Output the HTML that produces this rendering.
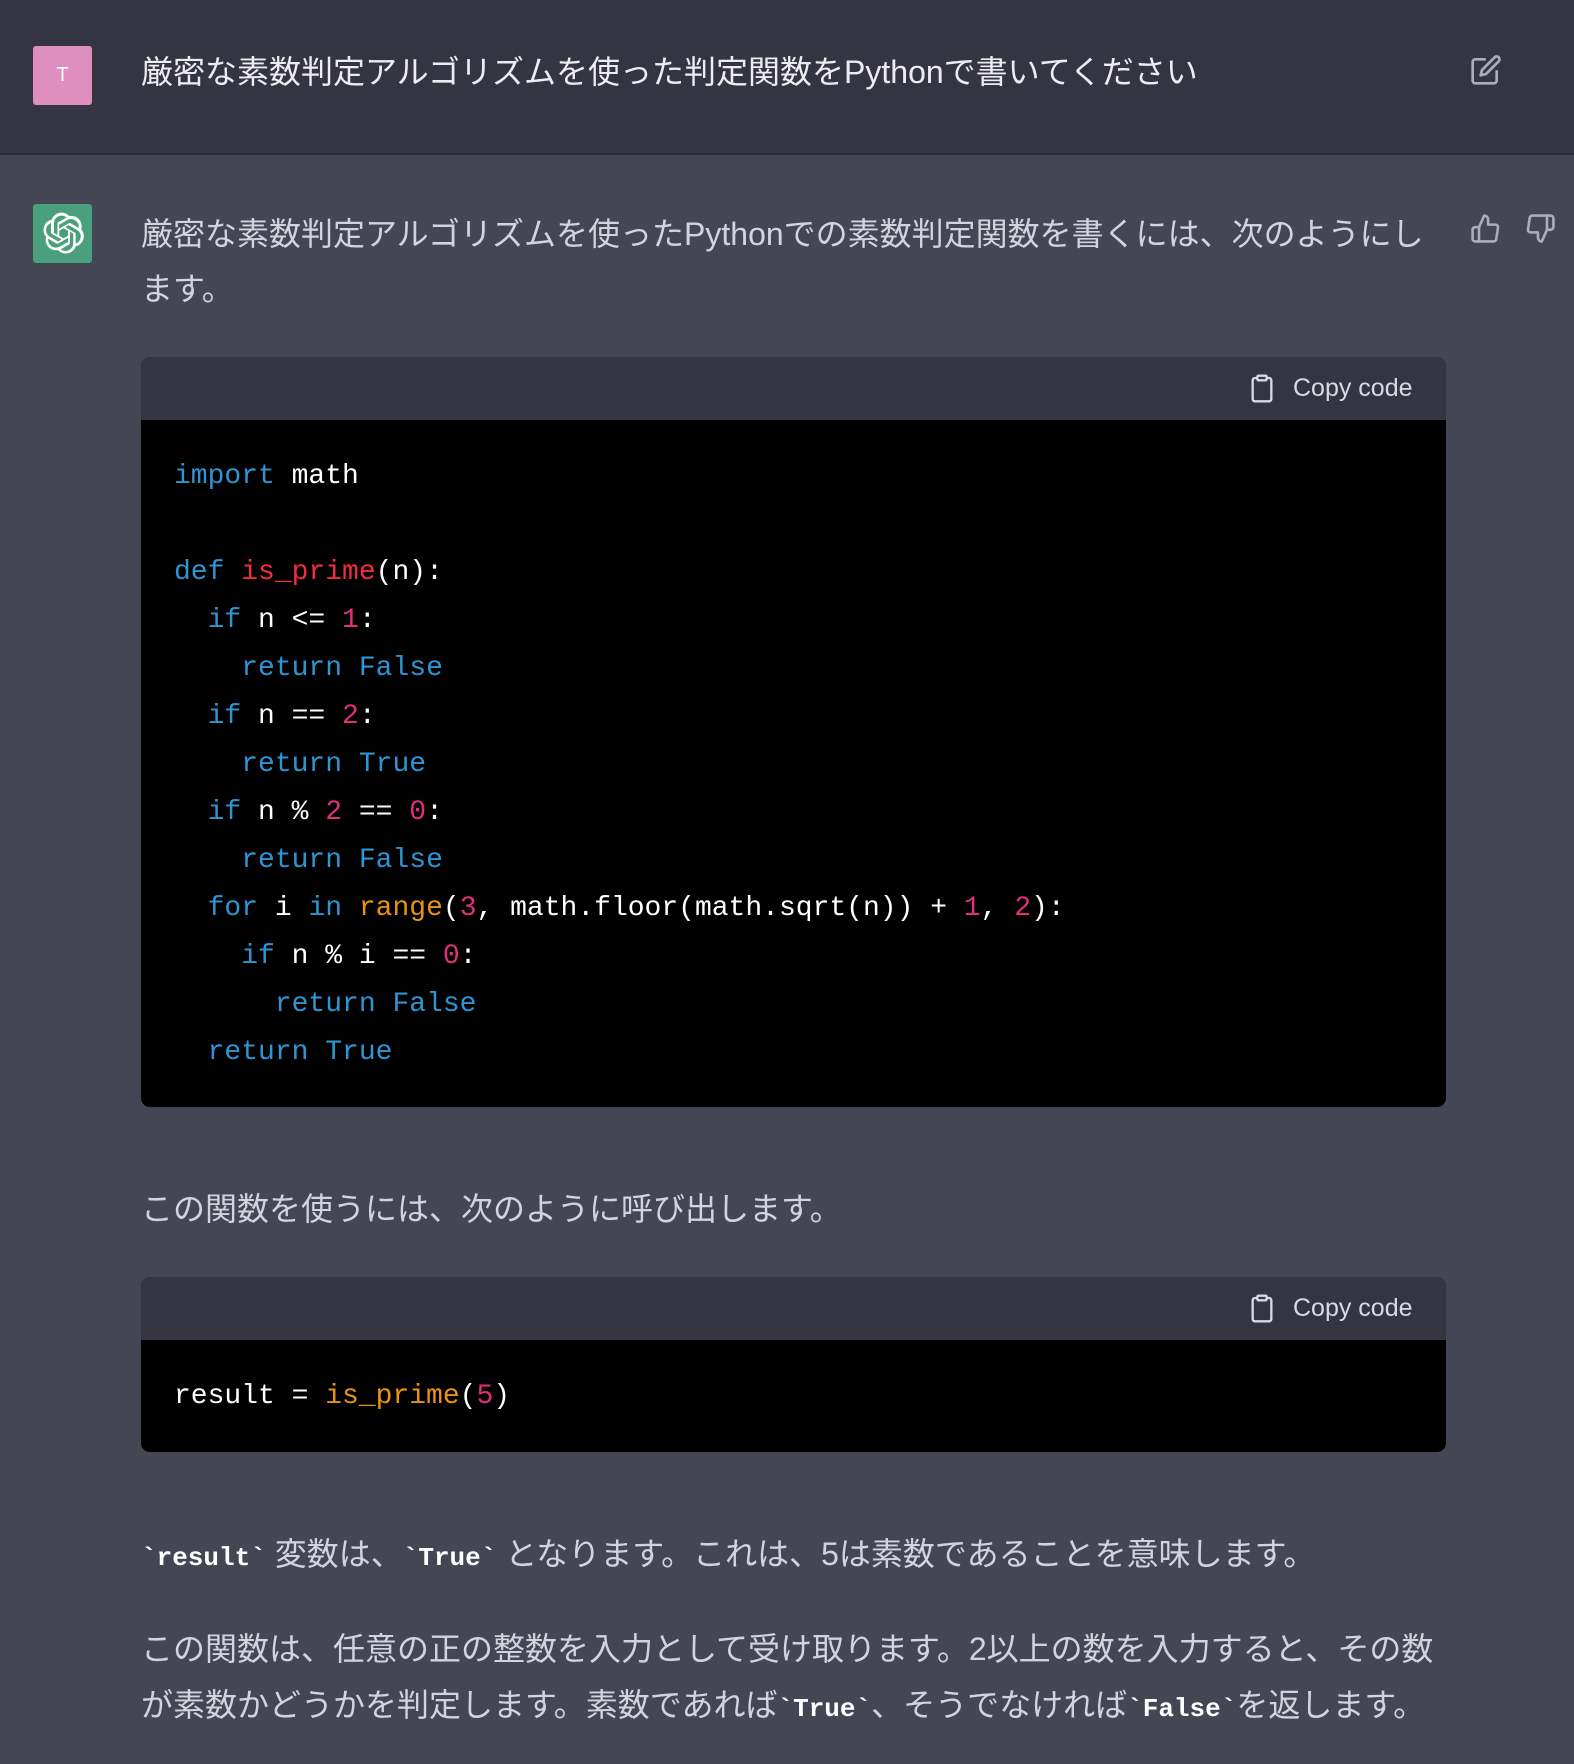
<!DOCTYPE html>
<html><head><meta charset="utf-8"><style>
*{margin:0;padding:0;box-sizing:border-box}
body{width:1574px;height:1764px;background:#444654;position:relative;overflow:hidden;font-family:"Liberation Sans","Noto Sans CJK JP",sans-serif;color:#d1d5db}
.hdr{position:absolute;left:0;top:0;width:1574px;height:155px;background:#343541;border-bottom:2px solid #2b2c35}
.t{position:absolute;font-size:32px;line-height:56px;height:56px;white-space:nowrap}
.av{position:absolute;left:33px;width:59px;height:59px;border-radius:3px}
.code{position:absolute;left:141px;width:1305px;background:#000;border-radius:9px;overflow:hidden}
.ch{height:63px;background:#343541;position:relative}
.cp{position:absolute;left:1152px;top:0;line-height:63px;font-size:25px;color:#d9d9e3}
.cp svg{position:absolute;left:-45px;top:16px}
.cl{position:absolute;left:33px;font-family:"Liberation Mono","DejaVu Sans Mono",monospace;font-size:28px;line-height:48px;color:#fff;white-space:pre}
.k{color:#2e95d3}.f{color:#f22c3d}.n{color:#df3079}.o{color:#e9950c}
code{font-family:"Liberation Mono",monospace;font-weight:bold;color:#fff;font-size:26px}
</style></head><body>
<div class="hdr"></div>
<div class="av" style="top:46px;background:#de8fbf;color:#fff;font-size:20px;line-height:59px;text-align:center">T</div>
<div class="t" style="left:141px;top:44px;color:#ececf1">厳密な素数判定アルゴリズムを使った判定関数をPythonで書いてください</div>
<svg style="position:absolute;left:1470px;top:54px" width="32" height="32" viewBox="0 0 24 24" fill="none" stroke="#acacbe" stroke-width="2" stroke-linecap="round" stroke-linejoin="round"><path d="M11 4H4a2 2 0 0 0-2 2v14a2 2 0 0 0 2 2h14a2 2 0 0 0 2-2v-7"/><path d="M18.5 2.5a2.1 2.1 0 0 1 3 3L12 15l-4 1 1-4 9.5-9.5z"/></svg>

<div class="av" style="top:204px;background:#4a9f7f"></div>
<svg style="position:absolute;left:40px;top:211px" width="45" height="45" viewBox="0 0 41 41" fill="#fff"><path d="M37.5 16.7a9.3 9.3 0 0 0-.8-7.6 9.4 9.4 0 0 0-10.1-4.5A9.3 9.3 0 0 0 19.6 1.5a9.4 9.4 0 0 0-9 6.5 9.3 9.3 0 0 0-6.2 4.5 9.4 9.4 0 0 0 1.2 11 9.3 9.3 0 0 0 .8 7.6 9.4 9.4 0 0 0 10.1 4.5 9.3 9.3 0 0 0 7 3.1 9.4 9.4 0 0 0 9-6.5 9.3 9.3 0 0 0 6.2-4.5 9.4 9.4 0 0 0-1.2-11zM23.5 36.4a7 7 0 0 1-4.5-1.6l.2-.1 7.4-4.3a1.2 1.2 0 0 0 .6-1.1V18.8l3.1 1.8v8.6a7 7 0 0 1-6.8 7.2zM8.4 30a7 7 0 0 1-.8-4.7l.2.1 7.4 4.3a1.2 1.2 0 0 0 1.2 0l9.1-5.2v3.6L18 32.4A7 7 0 0 1 8.4 30zM6.4 14a7 7 0 0 1 3.7-3.1v8.8a1.2 1.2 0 0 0 .6 1.1l9 5.2-3.1 1.8-7.5-4.3A7 7 0 0 1 6.4 14zm25.7 6L23 14.7l3.1-1.8 7.5 4.3a7 7 0 0 1-1.1 12.6v-8.8a1.2 1.2 0 0 0-.6-1.1zm3.1-4.6-.2-.1-7.4-4.3a1.2 1.2 0 0 0-1.2 0l-9.1 5.2v-3.6l7.5-4.3a7 7 0 0 1 10.4 7.2zM15.8 21.7l-3.1-1.8V11.3a7 7 0 0 1 11.5-5.4l-.2.1-7.4 4.3a1.2 1.2 0 0 0-.6 1.1zm1.7-3.7 4-2.3 4 2.3v4.6l-4 2.3-4-2.3z"/></svg>
<div class="t" style="left:141px;top:206px">厳密な素数判定アルゴリズムを使ったPythonでの素数判定関数を書くには、次のようにし</div>
<div class="t" style="left:141px;top:261px">ます。</div>
<svg style="position:absolute;left:1470px;top:213px" width="31" height="31" viewBox="0 0 24 24" fill="none" stroke="#acacbe" stroke-width="2" stroke-linecap="round" stroke-linejoin="round"><path d="M14 9V5a3 3 0 0 0-3-3l-4 9v11h11.3a2 2 0 0 0 2-1.7l1.4-9a2 2 0 0 0-2-2.3z"/><path d="M7 22H4a2 2 0 0 1-2-2v-7a2 2 0 0 1 2-2h3"/></svg>
<svg style="position:absolute;left:1525px;top:213px" width="31" height="31" viewBox="0 0 24 24" fill="none" stroke="#acacbe" stroke-width="2" stroke-linecap="round" stroke-linejoin="round"><path d="M10 15v4a3 3 0 0 0 3 3l4-9V2H5.7a2 2 0 0 0-2 1.7l-1.4 9a2 2 0 0 0 2 2.3z"/><path d="M17 2h2.7A2.3 2.3 0 0 1 22 4v7a2.3 2.3 0 0 1-2.3 2H17"/></svg>

<div class="code" style="top:357px;height:750px">
<div class="ch"><div class="cp"><svg width="28" height="31" viewBox="0 0 24 26" fill="none" stroke="#d9d9e3" stroke-width="2" stroke-linecap="round" stroke-linejoin="round"><path d="M16 4h2a2 2 0 0 1 2 2v16a2 2 0 0 1-2 2H6a2 2 0 0 1-2-2V6a2 2 0 0 1 2-2h2"/><rect x="8" y="2" width="8" height="4" rx="1"/></svg>Copy code</div></div>
<div class="cl" style="top:96px"><span class="k">import</span> math

<span class="k">def</span> <span class="f">is_prime</span>(n):
  <span class="k">if</span> n &lt;= <span class="n">1</span>:
    <span class="k">return</span> <span class="k">False</span>
  <span class="k">if</span> n == <span class="n">2</span>:
    <span class="k">return</span> <span class="k">True</span>
  <span class="k">if</span> n % <span class="n">2</span> == <span class="n">0</span>:
    <span class="k">return</span> <span class="k">False</span>
  <span class="k">for</span> i <span class="k">in</span> <span class="o">range</span>(<span class="n">3</span>, math.floor(math.sqrt(n)) + <span class="n">1</span>, <span class="n">2</span>):
    <span class="k">if</span> n % i == <span class="n">0</span>:
      <span class="k">return</span> <span class="k">False</span>
  <span class="k">return</span> <span class="k">True</span></div>
</div>

<div class="t" style="left:141px;top:1181px">この関数を使うには、次のように呼び出します。</div>

<div class="code" style="top:1277px;height:175px">
<div class="ch"><div class="cp"><svg width="28" height="31" viewBox="0 0 24 26" fill="none" stroke="#d9d9e3" stroke-width="2" stroke-linecap="round" stroke-linejoin="round"><path d="M16 4h2a2 2 0 0 1 2 2v16a2 2 0 0 1-2 2H6a2 2 0 0 1-2-2V6a2 2 0 0 1 2-2h2"/><rect x="8" y="2" width="8" height="4" rx="1"/></svg>Copy code</div></div>
<div class="cl" style="top:96px">result = <span class="o">is_prime</span>(<span class="n">5</span>)</div>
</div>

<div class="t" style="left:141px;top:1526px"><code>`result`</code> 変数は、<code>`True`</code> となります。これは、5は素数であることを意味します。</div>
<div class="t" style="left:141px;top:1621px">この関数は、任意の正の整数を入力として受け取ります。2以上の数を入力すると、その数</div>
<div class="t" style="left:141px;top:1677px">が素数かどうかを判定します。素数であれば<code>`True`</code>、そうでなければ<code>`False`</code>を返します。</div>
</body></html>
